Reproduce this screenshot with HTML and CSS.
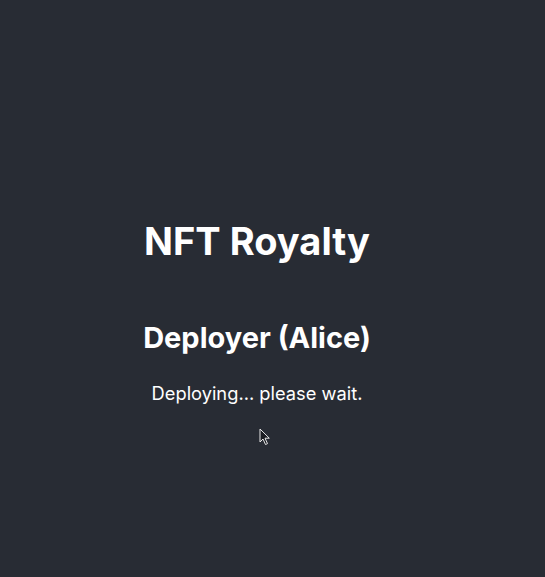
FILE: index.html
```html
<!DOCTYPE html>
<html>
<head>
<meta charset="utf-8">
<link rel="stylesheet" href="styles.css">
</head>
<body>
<div class="app">
  <header class="app-header">
    <h1 class="title">NFT Royalty</h1>
    <h2 class="subtitle">Deployer (Alice)</h2>
    <p class="status">Deploying... please wait.</p>
  </header>
</div>
<svg class="cursor" width="12" height="18" viewBox="0 0 12 18"><path d="M1 1 L1 14 L4 11 L6.5 16.5 L8.5 15.6 L6 10.2 L10.3 10.2 Z" fill="#1b1d22" stroke="#e8e8e8" stroke-width="1"/></svg>
</body>
</html>
```
FILE: styles.css
```css
html, body {
  margin: 0;
  padding: 0;
  background: #282c34;
}
.app {
  min-height: 577px;
  box-sizing: border-box;
  display: flex;
  flex-direction: column;
  align-items: center;
  justify-content: flex-start;
  padding: 219px 31px 0 0;
  font-family: Inter, "Noto Sans", sans-serif;
  color: #ffffff;
  text-align: center;
}
.app-header {
  display: flex;
  flex-direction: column;
  align-items: center;
}
.title {
  font-size: 38px;
  font-weight: 700;
  margin: 0;
  line-height: 1.2;
}
.subtitle {
  font-size: 29px;
  font-weight: 700;
  margin: 56px 0 0;
  line-height: 1.2;
}
.status {
  font-size: 18.3px;
  margin: 28px 0 0;
  line-height: 1.2;
}
.cursor {
  position: absolute;
  left: 259px;
  top: 428px;
}
```
